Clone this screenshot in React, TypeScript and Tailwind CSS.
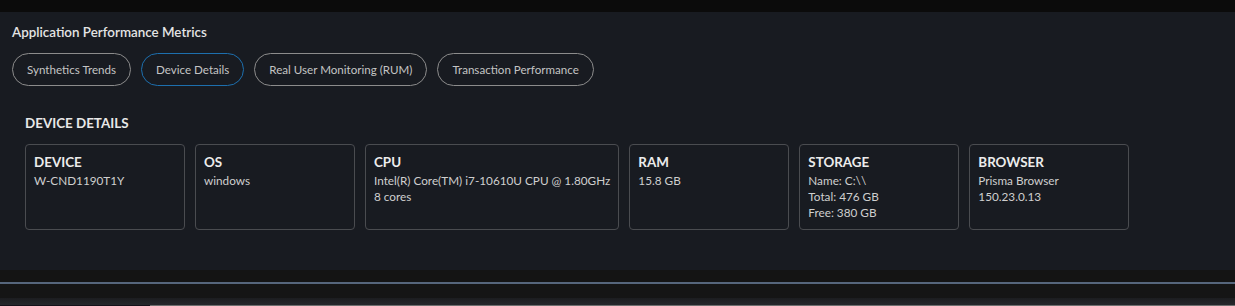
const tabs = [
  { label: "Synthetics Trends", active: false },
  { label: "Device Details", active: true },
  { label: "Real User Monitoring (RUM)", active: false },
  { label: "Transaction Performance", active: false },
];

const cards = [
  { title: "DEVICE", lines: ["W-CND1190T1Y"] },
  { title: "OS", lines: ["windows"] },
  { title: "CPU", lines: ["Intel(R) Core(TM) i7-10610U CPU @ 1.80GHz", "8 cores"] },
  { title: "RAM", lines: ["15.8 GB"] },
  { title: "STORAGE", lines: ["Name: C:\\\\", "Total: 476 GB", "Free: 380 GB"] },
  { title: "BROWSER", lines: ["Prisma Browser", "150.23.0.13"] },
];

const App = () => {
  return (
    <div className="flex h-[306px] w-[1235px] flex-col overflow-hidden bg-[#141414] font-['Lato','Liberation_Sans',sans-serif]">
      <div className="h-[12px] bg-[#0b0b0b]" />
      <div className="h-[258px] bg-[#181b21] px-3 pt-[12px]">
        <h1 className="text-[13.4px] leading-[16px] font-semibold text-[#e4e4e4]">
          Application Performance Metrics
        </h1>
        <div className="mt-[13px] flex gap-[10px]">
          {tabs.map((t) => (
            <button
              key={t.label}
              className={`h-[33px] rounded-full border-[1.5px] px-[14px] text-[11.6px] text-[#c4c4c4] ${
                t.active ? "border-[#1d6fae]" : "border-[#8c8c8c]"
              }`}
            >
              {t.label}
            </button>
          ))}
        </div>
        <div className="px-[13px]">
          <h2 className="mt-[29px] text-[13.4px] leading-[16px] font-bold text-[#e8e8e8]">
            DEVICE DETAILS
          </h2>
          <div className="mt-[13px] flex gap-[10px]">
            {cards.map((c) => (
              <div
                key={c.title}
                className="h-[86px] min-w-[160px] rounded-[4px] border-[1.5px] border-[#4a4c50] px-2 pt-[9px]"
              >
                <div className="mb-[2px] text-[13.4px] leading-[17px] font-bold text-[#ececec]">
                  {c.title}
                </div>
                {c.lines.map((l) => (
                  <div key={l} className="text-[11.75px] leading-[16px] whitespace-nowrap text-[#cfcfcf]">
                    {l}
                  </div>
                ))}
              </div>
            ))}
          </div>
        </div>
      </div>
      <div className="h-[12px] bg-[#141414]" />
      <div className="h-[2px] bg-[#56667c]" />
      <div className="h-[14px] bg-[#151515]" />
      <div className="h-[7px] bg-gradient-to-b from-[#1c1d20] to-[#25272b]" />
      <div className="flex h-[1px]">
        <div className="w-[150px] bg-[#15121a]" />
        <div className="flex-1 bg-[#6e6e6e]" />
      </div>
    </div>
  );
};

export default App;
